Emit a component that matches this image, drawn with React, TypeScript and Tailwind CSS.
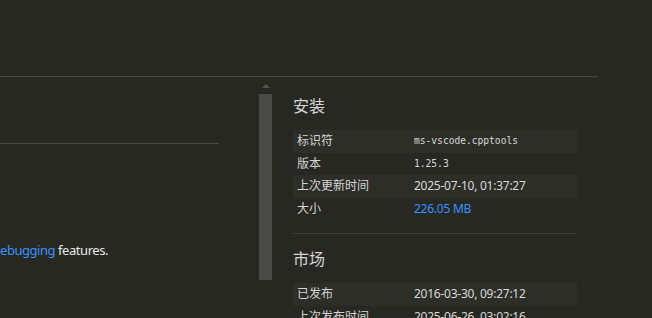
import React from "react";

const font = '"Noto Sans", "Noto Sans CJK SC", sans-serif';
const mono = '"DejaVu Sans Mono", "Liberation Mono", monospace';

function Row({ label, value, shaded, monoVal, link }: { label: string; value: string; shaded?: boolean; monoVal?: boolean; link?: boolean }) {
  return (
    <div className={`flex h-[22.5px] items-center ${shaded ? "bg-[#2d2e28]" : ""}`}>
      <div className="w-[121px] pl-[4px] text-[12px] text-[#d4d4d4]">{label}</div>
      <div
        className={`${monoVal ? "text-[9.6px]" : "text-[12px] tracking-[-0.25px]"} ${link ? "text-[#3794ff]" : "text-[#d8d8d8]"}`}
        style={monoVal ? { fontFamily: mono } : undefined}
      >
        {value}
      </div>
    </div>
  );
}

export default function App() {
  return (
    <div className="h-[318px] w-[652px] overflow-hidden bg-[#272822]" style={{ fontFamily: font }}>
      <div className="h-[76px]" />
      <div className="h-px w-[598px] bg-[#46473f]" />
      <div className="flex">
        <div className="w-[259px]">
          <div className="h-[66px]" />
          <div className="h-px w-[219px] bg-[#4a4b44]" />
          <div className="h-[98px]" />
          <div className="text-[13px] leading-[16px] tracking-[-0.45px] text-[#e8e8e8]">
            <span className="text-[#3794ff]">ebugging</span> features.
          </div>
        </div>
        <div className="flex w-[13px] flex-col items-center">
          <div className="mt-[7px] h-0 w-0 border-x-[4px] border-b-[4px] border-x-transparent border-b-[#55564f]" />
          <div className="mt-[6px] h-[186px] w-[13px] bg-[#4a4a46]" />
        </div>
        <div className="ml-[21px] w-[284px]">
          <div className="mt-[17px] h-[24px] text-[16px] leading-[24px] text-[#d4d4d4]">安装</div>
          <div className="mt-[12px]">
            <Row label="标识符" value="ms-vscode.cpptools" shaded monoVal />
            <Row label="版本" value="1.25.3" monoVal />
            <Row label="上次更新时间" value="2025-07-10, 01:37:27" shaded />
            <Row label="大小" value="226.05 MB" link />
          </div>
          <div className="mt-[13px] h-px bg-[#3e3f38]" />
          <div className="mt-[13px] h-[24px] text-[16px] leading-[24px] text-[#d4d4d4]">市场</div>
          <div className="mt-[12px]">
            <Row label="已发布" value="2016-03-30, 09:27:12" shaded />
            <Row label="上次发布时间" value="2025-06-26, 03:02:16" />
          </div>
        </div>
      </div>
    </div>
  );
}
